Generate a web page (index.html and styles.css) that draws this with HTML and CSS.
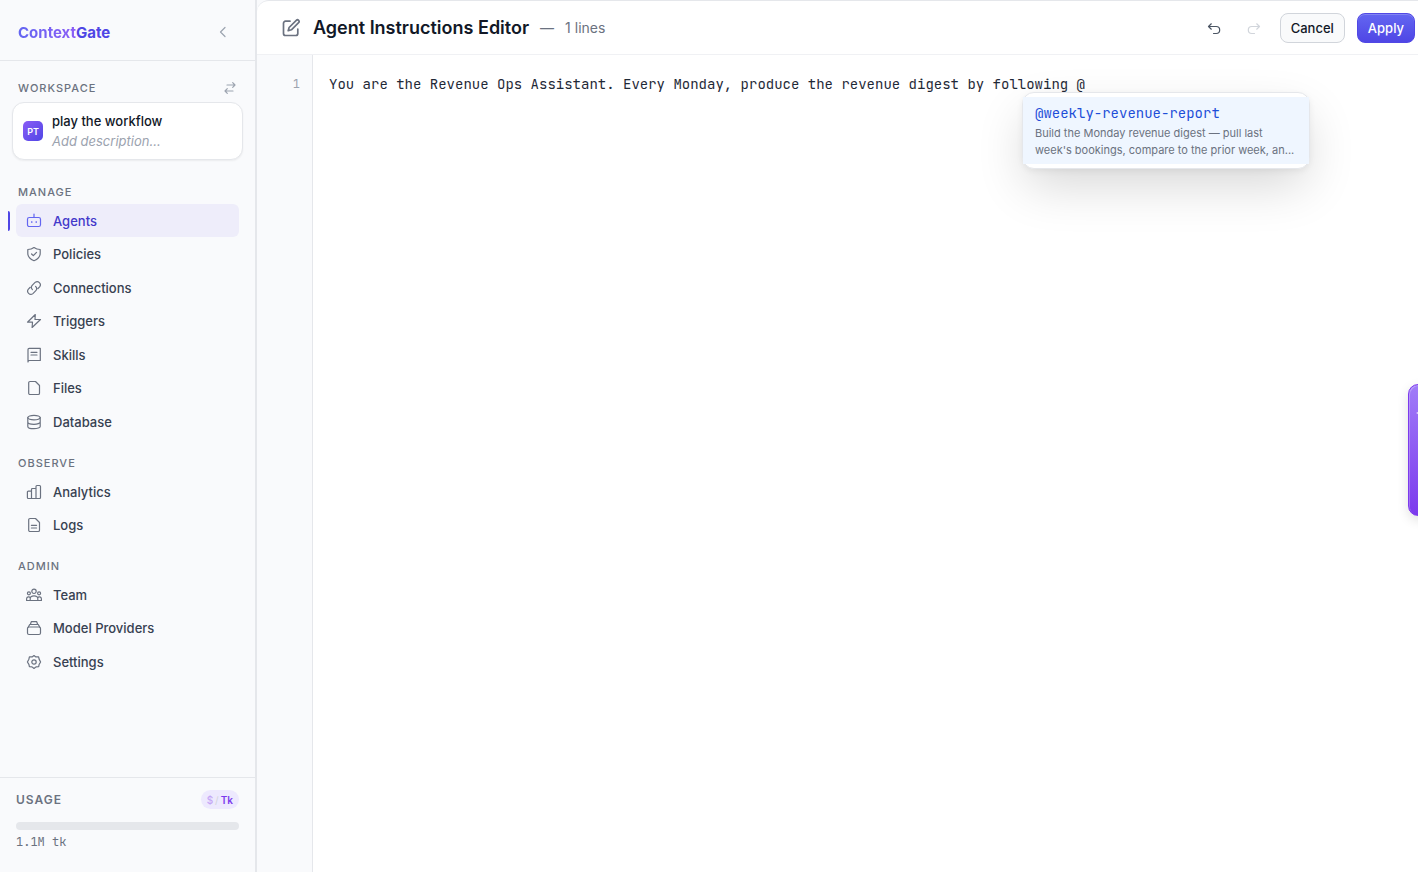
FILE: index.html
```html
<!DOCTYPE html>
<html lang="en">
<head>
  <meta charset="UTF-8" />
  <meta name="viewport" content="width=device-width, initial-scale=1.0" />
  <title>ContextGate - Agent Instructions Editor</title>
  <link rel="stylesheet" href="styles.css">
</head>
<body>
  <aside class="sidebar">
    <div class="brand-row">
      <a href="#" class="brand"><span class="brand-light">Context</span>Gate</a>
      <button type="button" class="icon-btn collapse" aria-label="Collapse sidebar">
        <svg width="16" height="16" viewBox="0 0 16 16"><path d="M10 3.5 5.5 8l4.500 4.500"/></svg>
      </button>
    </div>

    <div class="sidebar-body">
      <div class="label-row">
        <h2 class="label">WORKSPACE</h2>
        <button type="button" class="icon-btn swap" aria-label="Switch workspace">
          <svg width="14" height="14" viewBox="0 0 14 14"><path d="M4 4h8M9.7 1.7 12 4 9.7 6.3M10 10H2M4.300 7.700 2 10l2.300 2.300"/></svg>
        </button>
      </div>
      <div class="workspace">
        <span class="avatar">PT</span>
        <div>
          <div class="workspace-name">play the workflow</div>
          <div class="workspace-desc">Add description...</div>
        </div>
      </div>

      <nav>
        <h2 class="label">MANAGE</h2>
        <div class="nav-list">
          <a href="#" class="nav-item active">
            <svg class="icon" viewBox="0 0 16 16"><rect x="1.5" y="4.500" width="13" height="9" rx="1.800"/><path d="M8 1v3.500M5.800 8.500v1M10.200 8.500v1"/></svg>
            Agents
          </a>
          <a href="#" class="nav-item">
            <svg class="icon" viewBox="0 0 16 16"><path d="M8 1.500c1.800 1.400 3.800 2 6.200 2v3.700c0 3.700-2.400 6.100-6.200 7.500-3.800-1.400-6.200-3.800-6.200-7.500V3.500c2.400 0 4.400-.6 6.200-2zM5.600 8l1.700 1.700 3.200-3.300"/></svg>
            Policies
          </a>
          <a href="#" class="nav-item">
            <svg class="icon" viewBox="0 0 16 16"><path d="M6.400 9.600a3.200 3.200 0 0 1 0-4.500l2.700-2.700a3.200 3.200 0 0 1 4.500 4.500L12 8.500M9.600 6.400a3.200 3.200 0 0 1 0 4.500l-2.700 2.700a3.200 3.200 0 0 1-4.500-4.500L4 7.500"/></svg>
            Connections
          </a>
          <a href="#" class="nav-item">
            <svg class="icon" viewBox="0 0 16 16"><path d="M9.300 1.500 1.500 9.200h5l-.4 5.300 8.400-8H9z"/></svg>
            Triggers
          </a>
          <a href="#" class="nav-item">
            <svg class="icon" viewBox="0 0 16 16"><path d="M2 15V2.500a1.200 1.200 0 0 1 1.200-1.200H14.300v12.200H3.500A1.500 1.500 0 0 0 2 15zM5 5.300h6M5 8h6"/></svg>
            Skills
          </a>
          <a href="#" class="nav-item">
            <svg class="icon" viewBox="0 0 16 16"><path d="M4 1.500h5.500l4 4v7.700a1.300 1.300 0 0 1-1.300 1.300H4a1.300 1.300 0 0 1-1.300-1.300V2.800A1.300 1.300 0 0 1 4 1.500z"/></svg>
            Files
          </a>
          <a href="#" class="nav-item">
            <svg class="icon" viewBox="0 0 16 16"><ellipse cx="8" cy="3.600" rx="6.200" ry="2.300"/><path d="M1.800 3.600v8.800c0 1.300 2.800 2.300 6.200 2.300s6.200-1 6.200-2.300V3.600M1.800 8c0 1.300 2.800 2.300 6.200 2.300s6.200-1 6.200-2.300"/></svg>
            Database
          </a>
        </div>

        <h2 class="label">OBSERVE</h2>
        <div class="nav-list">
          <a href="#" class="nav-item">
            <svg class="icon" viewBox="0 0 16 16"><path d="M5.500 14.500H2.300a.9.9 0 0 1-.9-.9V8.100a.9.9 0 0 1 .9-.9h3.200M5.500 14.500V5.400a.9.9 0 0 1 .9-.9H10M5.500 14.500H10M10 14.500V2.400a.9.9 0 0 1 .9-.9h2.700a.9.9 0 0 1 .9.9v11.200a.9.9 0 0 1-.9.9z"/></svg>
            Analytics
          </a>
          <a href="#" class="nav-item">
            <svg class="icon" viewBox="0 0 16 16"><path d="M4 1.500h5.500l4 4v7.700a1.300 1.300 0 0 1-1.300 1.300H4a1.300 1.300 0 0 1-1.300-1.300V2.800A1.300 1.300 0 0 1 4 1.500zM5.400 8.300h5.200M5.400 11h5.200"/></svg>
            Logs
          </a>
        </div>

        <h2 class="label">ADMIN</h2>
        <div class="nav-list">
          <a href="#" class="nav-item">
            <svg class="icon" viewBox="0 0 16 16"><circle cx="8" cy="4.300" r="2.200"/><circle cx="2.900" cy="6.300" r="1.500"/><circle cx="13.100" cy="6.300" r="1.500"/><path d="M4.200 13.500v-1.700a3.800 3 0 0 1 7.600 0v1.700M.6 13.500v-1.800a2 2 0 0 1 3.700-.9M15.400 13.500v-1.800a2 2 0 0 0-3.700-.9M.6 13.500h14.800"/></svg>
            Team
          </a>
          <a href="#" class="nav-item">
            <svg class="icon" viewBox="0 0 16 16"><rect x="1.500" y="7" width="13" height="7.500" rx="1.500"/><path d="M2.200 7.200 3.700 4.500h8.600l1.500 2.700M4.300 4.500 5.300 1.700h5.400l1 2.800"/></svg>
            Model Providers
          </a>
          <a href="#" class="nav-item">
            <svg class="icon" viewBox="0 0 16 16"><circle cx="8" cy="8" r="2.200"/><path d="M8 1.500 9.900 2.900l2.700-.1.500 2.300 1.500 2.900-1.500 2.500-.4 2.200-2.700.2L8 14.500l-2-1.600-2.600-.2-.5-2.300L1.400 8l1.500-2.800.5-2.400 2.700.1z"/></svg>
            Settings
          </a>
        </div>
      </nav>
    </div>

    <div class="usage">
      <div class="usage-head">
        <h2 class="usage-title">USAGE</h2>
        <button type="button" class="unit-toggle"><span class="unit-off">$</span><span class="unit-sep">/</span><span>Tk</span></button>
      </div>
      <div class="usage-bar"></div>
      <div class="usage-value">1.1M tk</div>
    </div>
  </aside>

  <main class="main">
    <header class="topbar">
      <svg class="edit-icon" width="20" height="20" viewBox="0 0 20 20"><path d="M9 3.200H4.500A2 2 0 0 0 2.500 5.200v10.300a2 2 0 0 0 2 2h10.300a2 2 0 0 0 2-2V11"/><path d="M15.300 2.300a1.600 1.600 0 0 1 2.300 2.300L10.400 11.800l-3.200.9.900-3.200z"/></svg>
      <h1>Agent Instructions Editor</h1>
      <span class="dash">—</span>
      <span class="line-count">1 lines</span>
      <div class="actions">
        <button type="button" class="icon-btn history" aria-label="Undo">
          <svg width="16" height="16" viewBox="0 0 16 16"><path d="M5.300 3.800 2.500 6.500l2.800 2.700M2.500 6.500h7.700a3.500 3.500 0 0 1 0 7H7.500"/></svg>
        </button>
        <button type="button" class="icon-btn history" aria-label="Redo" disabled>
          <svg width="16" height="16" viewBox="0 0 16 16"><path d="M10.700 3.800l2.800 2.700-2.800 2.700M13.500 6.500H5.800a3.500 3.500 0 0 0 0 7h2.700"/></svg>
        </button>
        <button type="button" class="btn">Cancel</button>
        <button type="button" class="btn btn-primary">Apply</button>
      </div>
    </header>

    <div class="editor">
      <div class="gutter">1</div>
      <textarea class="code" aria-label="Agent instructions" spellcheck="false">You are the Revenue Ops Assistant. Every Monday, produce the revenue digest by following @</textarea>
      <button type="button" class="mention">
        <span class="mention-item">
          <span class="mention-name">@weekly-revenue-report</span>
          <span class="mention-desc">Build the Monday revenue digest — pull last week's bookings, compare to the prior week, an...</span>
        </span>
      </button>
    </div>
  </main>

  <button type="button" class="side-tab" aria-label="Open assistant">
    <svg width="12" height="12" viewBox="0 0 12 12"><path d="M6 0 7.500 4.500 12 6 7.500 7.500 6 12 4.500 7.500 0 6 4.500 4.500z"/></svg>
  </button>
</body>
</html>
```
FILE: styles.css
```css
* {
  box-sizing: border-box;
}

html, body {
  margin: 0;
  padding: 0;
  height: 100%;
}

body {
  display: flex;
  position: relative;
  overflow: hidden;
  background: #f9fafc;
  color: #111827;
  font-family: Inter, sans-serif;
  font-size: 13px;
}

h1, h2 {
  margin: 0;
}

a {
  color: inherit;
  text-decoration: none;
}

button {
  font-family: inherit;
  cursor: pointer;
}

svg {
  fill: none;
  stroke: currentColor;
  stroke-width: 1.2;
  stroke-linecap: round;
  stroke-linejoin: round;
  flex-shrink: 0;
}

.icon-btn {
  display: flex;
  align-items: center;
  justify-content: center;
  width: 28px;
  height: 28px;
  padding: 0;
  border: 0;
  background: none;
  color: #9ca3af;
}

/* sidebar */
.sidebar {
  display: flex;
  flex-direction: column;
  flex-shrink: 0;
  width: 257px;
  border-right: 2px solid #e5e7eb;
}

.brand-row {
  display: flex;
  align-items: center;
  justify-content: space-between;
  height: 61px;
  padding: 4px 18px 0;
  border-bottom: 1px solid #e5e7eb;
}

.brand {
  color: #4f46e5;
  font-size: 15px;
  font-weight: 700;
}

.brand-light {
  background: linear-gradient(90deg, #6366f1, #8b5cf6);
  background-clip: text;
  -webkit-background-clip: text;
  color: transparent;
}

.sidebar-body {
  flex: 1;
  padding: 17px 16px 0;
}

.label-row {
  display: flex;
  align-items: center;
  justify-content: space-between;
}

.label {
  padding-left: 2px;
  color: #6b7280;
  font-size: 11px;
  font-weight: 500;
  line-height: 20px;
  letter-spacing: 1px;
}

.swap {
  width: 18px;
  height: 20px;
}

.workspace {
  display: flex;
  align-items: center;
  gap: 9px;
  margin: 4px -4px 22px;
  padding: 8px 10px;
  border: 1px solid #e5e7eb;
  border-radius: 12px;
  background: #fff;
  box-shadow: 0 1px 2px rgba(0, 0, 0, 0.06);
}

.avatar {
  display: flex;
  align-items: center;
  justify-content: center;
  width: 20px;
  height: 20px;
  border-radius: 5px;
  background: linear-gradient(135deg, #8b5cf6, #4f46e5);
  color: #fff;
  font-size: 9px;
  font-weight: 600;
}

.workspace-name {
  font-weight: 500;
  line-height: 20px;
}

.workspace-desc {
  color: #9ca3af;
  font-style: italic;
  line-height: 20px;
}

.nav-list {
  margin: 2px 0 15px;
}

.nav-item {
  display: flex;
  align-items: center;
  gap: 11px;
  position: relative;
  height: 33px;
  padding: 0 10px;
  border-radius: 6px;
  color: #374151;
  font-weight: 500;
}

.nav-item:nth-child(even) {
  margin-bottom: 1px;
}

.icon {
  width: 16px;
  height: 16px;
  color: #6b7280;
}

.nav-item.active {
  background: #eeedfa;
  color: #4338ca;
}

.nav-item.active .icon {
  color: #6366f1;
}

.nav-item.active::before {
  content: "";
  position: absolute;
  left: -8px;
  top: 7px;
  width: 2px;
  height: 20px;
  border-radius: 0 2px 2px 0;
  background: #4f46e5;
}

.usage {
  padding: 12px 16px 21px;
  border-top: 1px solid #e5e7eb;
}

.usage-head {
  display: flex;
  align-items: center;
  justify-content: space-between;
  height: 19px;
  margin-bottom: 13px;
}

.usage-title {
  color: #6b7280;
  font-size: 12px;
  font-weight: 600;
  letter-spacing: 1px;
}

.unit-toggle {
  display: flex;
  align-items: center;
  gap: 2px;
  height: 19px;
  padding: 0 6px;
  border: 0;
  border-radius: 10px;
  background: #ede9fe;
  color: #7c3aed;
  font-size: 10px;
  font-weight: 600;
}

.unit-off {
  color: #c4a5f5;
  font-weight: 500;
}

.unit-sep {
  color: #d1d5db;
  font-weight: 400;
}

.usage-bar {
  height: 8px;
  border-radius: 4px;
  background: #e5e7eb;
}

.usage-value {
  margin-top: 3px;
  color: #6b7280;
  font-family: "JetBrains Mono", "Liberation Mono", monospace;
  font-size: 12px;
  line-height: 18px;
}

/* editor */
.main {
  display: flex;
  flex-direction: column;
  flex: 1;
  min-width: 0;
  overflow: hidden;
  border-top: 1px solid #e5e7eb;
  border-top-left-radius: 12px;
  background: #fff;
}

.topbar {
  display: flex;
  align-items: center;
  height: 54px;
  padding: 0 3px 0 24px;
  border-bottom: 1px solid #f0f1f4;
}

.edit-icon {
  margin-right: 12px;
  color: #6b7280;
  stroke-width: 1.7;
}

h1 {
  font-size: 18px;
  font-weight: 600;
}

.dash, .line-count {
  margin-left: 11px;
  color: #6b7280;
  font-size: 14px;
}

.actions {
  display: flex;
  align-items: center;
  gap: 12px;
  margin-left: auto;
}

.history {
  color: #4b5563;
}

.history:disabled {
  color: #d1d5db;
  cursor: default;
}

.btn {
  height: 30px;
  padding: 0 10px;
  border: 1px solid #d1d5db;
  border-radius: 8px;
  background: #f9fafb;
  color: #111827;
  font-size: 13px;
  font-weight: 500;
}

.btn-primary {
  border-color: #5148e5;
  background: linear-gradient(#6366f1, #4f46e5);
  color: #fff;
  box-shadow: inset 0 1px 0 rgba(255, 255, 255, 0.2);
}

.editor {
  display: flex;
  flex: 1;
  position: relative;
}

.gutter, .code {
  font-family: "JetBrains Mono", "DejaVu Sans Mono", monospace;
  line-height: 22px;
}

.gutter {
  width: 56px;
  padding: 18px 12px;
  border-right: 1px solid #e5e7eb;
  background: #f9fafc;
  color: #9ca3af;
  font-size: 12px;
  text-align: right;
}

.code {
  flex: 1;
  padding: 18px 16px;
  border: 0;
  outline: 0;
  resize: none;
  background: none;
  color: #1f2937;
  font-size: 14px;
}

.mention {
  position: absolute;
  top: 37px;
  left: 765px;
  width: 288px;
  padding: 4px 0;
  border: 1px solid #e5e7eb;
  border-radius: 12px;
  background: #fff;
  box-shadow: 0 20px 50px -4px rgba(0, 0, 0, 0.16), 0 2px 6px rgba(0, 0, 0, 0.06);
  text-align: left;
}

.mention-item {
  display: block;
  padding: 6px 12px 5px;
  background: #eff6ff;
}

.mention-name {
  display: block;
  margin-bottom: 2px;
  color: #1d4ed8;
  font-family: "JetBrains Mono", "DejaVu Sans Mono", monospace;
  font-size: 14px;
  line-height: 20px;
}

.mention-desc {
  display: block;
  color: #6b7280;
  font-size: 11px;
  line-height: 17px;
}

.side-tab {
  display: flex;
  align-items: flex-start;
  position: absolute;
  top: 384px;
  right: -30px;
  width: 40px;
  height: 132px;
  padding: 22px 7px;
  border: 1px solid #7c3aed;
  border-radius: 10px 0 0 10px;
  background: linear-gradient(#a07cf8, #7c3aed);
  box-shadow: inset 1px 1px 0 rgba(255, 255, 255, 0.25), 0 4px 12px rgba(0, 0, 0, 0.12);
  color: #fff;
}

.side-tab svg {
  fill: currentColor;
  stroke: none;
}
```
